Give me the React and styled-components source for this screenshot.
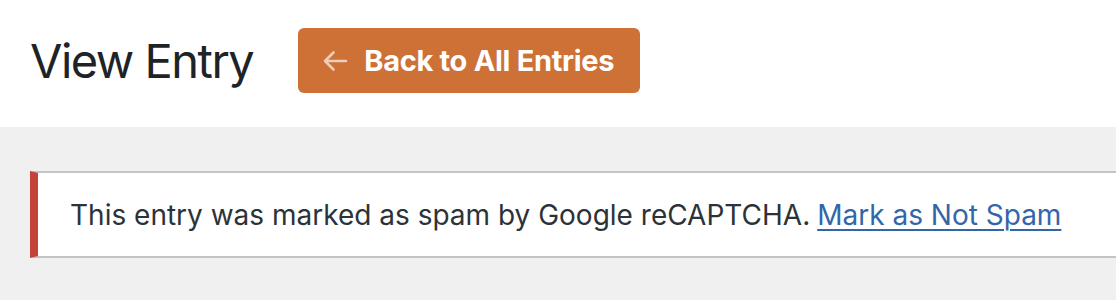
import React from "react";
import styled, { createGlobalStyle } from "styled-components";

const GlobalStyle = createGlobalStyle`
  html, body {
    margin: 0;
    padding: 0;
    background: #f0f0f1;
    font-family: Inter, "Noto Sans", "Liberation Sans", sans-serif;
    -webkit-font-smoothing: antialiased;
  }
`;

const Page = styled.div`
  width: 1116px;
  height: 300px;
  overflow: hidden;
  background: #f0f0f1;
`;

const Header = styled.header`
  display: flex;
  align-items: center;
  height: 127px;
  padding: 0 0 6px 30px;
  gap: 45px;
  background: #fff;
  box-sizing: border-box;
`;

const Title = styled.h1`
  margin: 0;
  font-size: 47px;
  font-weight: 400;
  color: #1d2327;
  letter-spacing: -1.5px;
  line-height: 1;
`;

const BackButton = styled.a`
  display: flex;
  align-items: center;
  gap: 16px;
  height: 65px;
  padding: 0 26px 0 24px;
  box-sizing: border-box;
  border-radius: 6px;
  background: #cd7137;
  color: #fff;
  font-size: 29px;
  font-weight: 700;
  letter-spacing: -0.3px;
  text-decoration: none;
  cursor: pointer;
`;

const Content = styled.main`
  padding: 44px 0 0 30px;
`;

const Notice = styled.div`
  display: flex;
  align-items: center;
  width: 1200px;
  height: 87px;
  box-sizing: border-box;
  padding-left: 32px;
  background: #fff;
  border-top: 2px solid #c3c4c7;
  border-bottom: 2px solid #c3c4c7;
  border-left: 8px solid #c5413a;
  font-size: 28px;
  color: #2c3338;
`;

const NoticeLink = styled.a`
  margin-left: 7px;
  color: #3366a8;
  text-decoration: underline;
  text-underline-offset: 4px;
  text-decoration-thickness: 2px;
`;

const ArrowLeft = () => (
  <svg width="26" height="22" viewBox="0 0 26 22" fill="none">
    <path
      d="M24 11H3M11.5 2.5L3 11l8.5 8.5"
      stroke="rgba(255,255,255,0.65)"
      strokeWidth="2.6"
      strokeLinecap="round"
      strokeLinejoin="round"
    />
  </svg>
);

export default function App() {
  return (
    <Page>
      <GlobalStyle />
      <Header>
        <Title>View Entry</Title>
        <BackButton>
          <ArrowLeft />
          Back to All Entries
        </BackButton>
      </Header>
      <Content>
        <Notice>
          This entry was marked as spam by Google reCAPTCHA.
          <NoticeLink>Mark as Not Spam</NoticeLink>
        </Notice>
      </Content>
    </Page>
  );
}
